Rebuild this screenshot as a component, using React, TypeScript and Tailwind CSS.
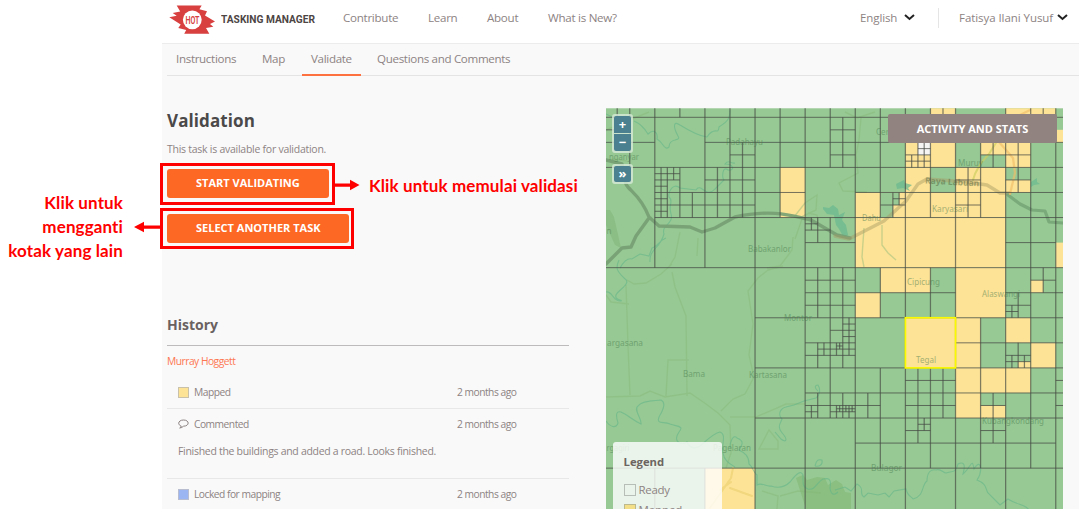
import React from "react";

type Box = [number, number, number, number];

const GREEN = "#97c994";
const YELLOW = "#fde396";

// Task grid coordinates: one unit is the side of a small task square.
const OX = 654.8;
const OY = 117.3;
const U = 25.06;
const px = (x: number) => OX + x * U;
const py = (y: number) => OY + y * U;

const T = -0.36;
const B = 15.65;
const L = -1.96;
const R = 16.32;

// x, y, width, height
const mapped: Box[] = [
  [11, T, 1, 0.36], [14, T, 2, 0.36], [16, 0.5, 0.4, 0.5], [10, 0, 2, 2], [13, 1, 2, 1],
  [10, 2, 1, 1], [12, 2, 2, 1], [14, 2.5, 1, 0.5], [8, 3, 6, 1], [8, 4, 6, 2],
  [16, 5, 0.4, 1], [9, 6, 2, 1], [12, 6, 2, 2], [8, 7, 1, 1], [15, 6.5, 0.5, 0.5],
  [10, 8, 2, 2], [12, 8, 1, 2], [14, 8, 1, 1], [15, 9, 1, 1], [14.5, 9.75, 0.5, 0.25],
  [12, 10, 3, 1], [12, 11, 1, 1], [13, 11.5, 1, 0.5], [5, 2, 1, 2], [2, 14, 2, 1.7],
];
const validated: Box[] = [
  [13, 1.5, 1, 0.5], [9, 3, 0.5, 1], [9.5, 3, 0.25, 0.5],
];

// y, then x from and to
const rows: [number, number, number][] = [
  [0, L, R], [1, L, 0], [1, 2, R], [2, L, R], [3, 0, 6], [3, 8, R], [4, 0, R], [5, 6, 8], [5, 14, 16],
  [6, L, R], [7, 6, 12], [7, 14, R], [8, 4, R], [9, 6, 8], [9, 12, R], [10, 4, R], [11, 6, R], [12, 4, R],
  [13, 8, 16], [14, L, R],
  [0.5, L, -1.5], [2.5, 0, 1], [2.5, 2, 4], [3.5, 0, 4], [1.5, 3, 4], [0.5, 7, 8], [1.5, 7, 8],
  [2.25, 0, 1], [2.75, 0, 0.5], [3.25, 0, 0.5], [3.75, 0, 0.5],
  [4.5, 6, 7], [4.25, 6, 6.5], [6.5, 6, 8], [7.5, 6, 8], [8.5, 7, 8], [9.5, 6, 8], [9.25, 6.5, 8],
  [8.25, 7.5, 8], [8.75, 7.5, 8], [9.125, 7.25, 7.5], [11.5, 6, 9], [11.75, 6, 6.5], [11.75, 7, 8],
  [11.63, 7.25, 8], [10.5, 10, 12], [10.5, 16, R], [11.5, 10, 12], [11.5, 16, R], [12.5, 10, 11],
  [12.25, 10.5, 11], [12.5, 13, 14], [11.5, 13, 14], [6.5, 15, 16], [7.5, 14, 15], [7.75, 14, 14.5],
  [9.5, 14, 15], [9.75, 14, 15], [1.5, 10, 11], [1.5, 13, 15], [1.25, 10.5, 11], [1.75, 10, 11],
  [2.5, 12, 13], [2.5, 14, 15], [3.5, 12, 13], [3.5, 9, 10], [3.25, 9.5, 10],
];
// x, then y from and to
const cols: [number, number, number][] = [
  [0, T, 6], [0, 14, B], [-1.5, T, 0], [-1, T, 2], [1, T, 0], [1, 2, 4], [2, T, 6], [2, 14, B],
  [3, T, 4], [2.5, 2, 4], [1.5, 3, 4], [3.5, 1, 4], [4, T, B], [5, T, 4], [6, T, B], [7, T, 2],
  [7, 4, 12], [8, T, B], [9, T, 4], [9, 6, 8], [9, 10, 14], [10, T, B], [11, T, 4], [11, 6, 8],
  [11, 10, 14], [12, T, B], [13, 1, 4], [13, 8, 14], [14, T, B], [15, T, 14], [16, T, B],
  [11.5, T, 0], [15.5, T, 0], [0.25, 2, 4], [0.5, 2, 4], [0.75, 2, 2.5], [7.5, 0, 2],
  [6.25, 4, 4.5], [6.5, 4, 5], [6.5, 6, 8], [7.5, 6, 8], [6.5, 9, 10], [6.75, 9, 9.5], [7.25, 9, 9.5],
  [7.5, 8, 10], [7.75, 8, 9.5], [7.375, 9, 9.25], [6.25, 11.5, 12], [6.5, 11, 12], [7.5, 11, 12],
  [7.25, 11.5, 12], [7.375, 11.5, 11.75], [7.625, 11.5, 11.75], [7.75, 11.5, 12], [7.875, 11.5, 11.75],
  [8.5, 11, 12], [10.5, 10, 13], [11.5, 10, 12], [10.75, 12, 12.5], [13.5, 11, 13], [15.5, 6, 7],
  [14.5, 7, 8], [14.25, 7.5, 8], [14.5, 9, 10], [14.25, 9.5, 10], [14.75, 9.5, 10],
  [10.5, 1, 2], [10.75, 1, 2], [10.25, 1.5, 2], [13.5, 1, 2], [14.5, 1, 3], [12.5, 2, 4],
  [9.5, 3, 4], [9.75, 3, 3.5],
];

const places: [string, number, number, number][] = [
  ["Padahayu", 726, 144.5, 37], ["nganyar", 609, 159.5, 30], ["Babakanlor", 748, 251.5, 43],
  ["Cer", 876, 135, 13], ["Muruy", 958, 166, 25], ["Karyasari", 932, 212, 36],
  ["Dahu", 862, 220.5, 19], ["Montor", 784, 320.5, 28], ["argasana", 607, 345.5, 36],
  ["Bama", 683, 377, 22], ["Kartasana", 749, 377.5, 38], ["Cipicung", 907, 285, 33],
  ["Alaswangi", 982, 296.5, 38], ["Tegal", 916, 363, 20], ["rgagiri", 606.5, 450.5, 23],
  ["Pagelaran", 713, 450.5, 38], ["Kubangkondang", 982, 423.5, 62], ["Bulagor", 871, 471, 31],
  ["n", 606.5, 234, 5],
];

function TaskMap() {
  return (
    <svg className="block h-full w-full" viewBox="606 108 457 401" preserveAspectRatio="none">
      <rect x="606" y="108.3" width="457" height="402" fill={GREEN} />
      {mapped.map(([x, y, w, h], i) => (
        <rect key={i} x={px(x)} y={py(y)} width={w * U} height={h * U} fill={YELLOW} />
      ))}
      {validated.map(([x, y, w, h], i) => (
        <rect key={i} x={px(x)} y={py(y)} width={w * U} height={h * U} fill={GREEN} />
      ))}
      <rect x={px(10.5)} y={py(1)} width={U / 2} height={U / 2} fill="#f5f6f4" />

      {/* woods */}
      <path d="M606 210l4 0 4 7 7 31-6-3-9-20z" fill="#87b97f" opacity=".75" />
      <path d="M796 478l7-3 4 5 10-3 8 1 3 7 8-5 6 4 3 8 6 1v16H806z" fill="#85bb79" opacity=".7" />
      <g fill="#6cba90" opacity=".75">
        <path d="M823 207l6 1 4-3 5 4 1 6 6-3-3 8 4 5 2 10-4 3-5-9-3-4-2-10-7-1-4-5z" />
        <path d="M896 184l8-4 1 3 7 2-4 3 2 3-7-3-6 1z" />
        <path d="M1031 182l3-2 3-2v4l3 2-6 1-3 2z" />
      </g>

      {/* minor tracks */}
      <g fill="none" stroke="#85b777" strokeWidth="1.4" opacity=".42">
        <path d="M606 161l8-2 13 2M606 130l19-8 24-10M627 280l7 4 12-1 15-9 11-10M672 272l3 15 11 29 1 80M626 285l2 60 2 50" />
        <path d="M606 397l34-1 10-5 15 6 25-4 16 11 12 9 12 12 1 28-5 15M666 396l2-36h21M721 411l12-12 12-5 9-17M730 417h26l30-13h19" />
        <path d="M754 377l-5-22 4-31-5-33 10-13 10-8 15-4M606 295l5 7 18 2M680 232l-5 25-6 10M698 238l-1 18" />
        <path d="M793 237l-1 13-12 16-13 2M795 239l8-23 13-6 1-15-12 8-11 14M808 213l9 2 1 8" />
        <path d="M845 112l12 6 18-6M861 118l-2 22-3 15 2 18-19 10 4 8 24 1M864 228l-2 29 2 10M882 225v20l6 8 8 7" />
        <path d="M759 449l10-19 9 11v8zM762 491l16 5-1 13M780 496l18-5 23 2" />
      </g>
      {/* rivers */}
      <g fill="none" stroke="#62b58a" strokeWidth="1.1" opacity=".58">
        <path d="M634 121c7 3 11 8 14 13 6-6 10-1 9 5 7 4 7 12 12 8 0-10 13-5 9-11-5-9-5-16 2-11 8 5 18 11 27 12 8-12 11-1 12-10 5-4 11-5 11-17" />
        <path d="M606 114l12 6 8-5M735 163c-4 1-6-4-10 1 9 0 10 7 3 6-6-5-6 8-4 10l-9 9c-9 10-14-7-19 1l-16-2c-7-6-12 4-11 9 5 4-1 7 2 17s-10 11-7 20c-4 15-15 15-14 28M620 268c4-7 8-10 12-9l8-5 9 2 3-8c5-1 8-8 14-10" />
        <path d="M619 260c-5 11 1 13 5 18 9 5-6 12-8 17s7 5 5 6c-8 1-9-11-15-9" />
        <path d="M606 421c4 6 10 8 12 2-3-10-1-12 3-11 7 3 11 8 20 12 1-6-8-14-3-18 5-6 16-5 23-6 6 3 1 12-2 17-3 8 5 4 11 7 9 3 14 2 9 8-7 10 3 14 8 10 2 5 7 8 13 4 8-7 14-13 20-14 7 2 1 14 3 21 1 8 7 11 12 14M730 448c0-8 4-14 7-10 8 3 5 7 2 12 6 3 10 6 10 14 4 3 4 8 8 11v10c5-3 9 2 14 1 6 2 13 2 19-4 7-9 11-12 13-7 0 7-1 12 5 14 7 2 9-7 15-10 5-1 9-1 7 9 1 8 5 7 8 4" />
        <path d="M783 434c-7-8-2-11-1-15-5-5-1-11 4-12l8-2 10-4 12-3c5-4 4-10 2-13-4 0-3 4 0 6M783 434c5 6 3 9-2 5l-6-7M815 466c2-8 4-6 7-6 1 5-3 7-7 6" />
        <path d="M835 490l10-3 6 4 6-7c9 5 1 10 7 13l4-4 10 2 7-2 4 4 5-6 12-2c2 8 4 6 7 10 12-3 8-14 14-18 0-9 4-12 9-11 5-2 7 3 10 3 7-2 10 0 12-9 9-4 6 6 5 10 8-6 9-18 11-5 7-12 9 2 3 11 10 4 8 8 11 13l12 12 8-6c12 8 18 3 24 16" />
      </g>
      {/* main roads */}
      <g fill="none" strokeLinejoin="round" strokeLinecap="round">
        <path d="M606 264l16-16 9-1 5-11 13-18M606 160l16 4 4 20c3 7 14 10 23 33l10 9 31 1 12 5 13-4 20-11c40-9 60 0 76 3l26 15 13 3" stroke="#769f73" strokeWidth="3.4" opacity=".9" />
        <path d="M835 236l14 3 35-18 22-20 12-17 9-5 40 3 20 3 13 8h10" stroke="#a69963" strokeWidth="3.4" opacity=".45" />
        <path d="M1008 195l12 9 12 6 13 1 4 11 14 1" stroke="#709d72" strokeWidth="3.2" opacity=".75" />
        <path d="M973 180c3-12 10-20 16-26l10-16" stroke="#cdd05c" strokeWidth="2" opacity=".65" />
        <path d="M999 142l14 16 2 15-5 21M1014 118l16-8" stroke="#f1be69" strokeWidth="2.3" opacity=".65" />
        <path d="M733 468l-2 10-9 13-12 17M731 482l-11 8M730 488l22 8" stroke="#edd274" strokeWidth="2" opacity=".7" />
      </g>

      <g stroke="#454944" fill="none">
        {rows.map(([y, a, b], i) => (
          <line key={i} x1={px(a)} x2={px(b)} y1={py(y)} y2={py(y)} strokeWidth="1" opacity=".75" />
        ))}
        {cols.map(([x, a, b], i) => (
          <line key={i} x1={px(x)} x2={px(x)} y1={py(a)} y2={py(b)} strokeWidth="1.25" opacity=".68" />
        ))}
      </g>
      <g fontFamily="Noto Sans, Open Sans, sans-serif" fontSize="8" fill="#497c4e" opacity=".5">
        {places.map(([name, x, y, w]) => (
          <text key={name} x={x} y={y} textLength={w} lengthAdjust="spacingAndGlyphs">{name}</text>
        ))}
        <text x="925" y="183.5" fontSize="8.5" fontWeight="700" textLength="54" lengthAdjust="spacingAndGlyphs" fill="#55683f" transform="rotate(3 925 184)">Raya Labuan</text>
      </g>
      <rect x={px(10)} y={py(8)} width={2 * U} height={2 * U} fill="none" stroke="#fbfb00" strokeWidth="1.7" />
    </svg>
  );
}

function Chevron() {
  return (
    <svg className="h-[7px] w-[11px]" viewBox="0 0 11 7" fill="none" stroke="#222" strokeWidth="2">
      <path d="M1 1l4.5 4L10 1" />
    </svg>
  );
}

function HotLogo() {
  return (
    <svg className="h-[30px] w-[46px] shrink-0" viewBox="0 0 46 30">
      <path d="M7.7 1.5h25l-2.3 3.8 7.6 1.9-2 4.4 10 5.9-5 2.6 3.3 2.6-7.3 1.2 3.3 5.8H15.2l2-3.6-7.9-2 2.4-3.5L.3 13.3l7.4-1.6-4-2.6 7.5-1.5z" fill="#d83f3f" />
      <circle cx="23.3" cy="15.8" r="9.4" fill="#fff" />
      <text x="16.4" y="19.6" fontFamily="Roboto" fontWeight="600" fontSize="10" textLength="14" lengthAdjust="spacingAndGlyphs" fill="#d83f3f">HOT</text>
    </svg>
  );
}

function HistoryRow({ mark, label }: { mark: React.ReactNode; label: string }) {
  return (
    <div className="flex h-[31px] items-center pl-[11px] text-[10.25px] tracking-[-0.5px]">
      <span className="flex w-[16px] pb-px">{mark}</span>
      <span className="w-[263px]">{label}</span>
      <span>2 months ago</span>
    </div>
  );
}

const button = "flex h-[29px] items-center rounded-[3px] bg-[#fd6825] pl-[29px] text-[11px] font-bold text-white";

export default function App() {
  return (
    <div className="relative h-[512px] w-[1085px] overflow-hidden bg-white font-['Open_Sans','Noto_Sans',sans-serif] text-[#8d8383]">
      <div className="ml-[162px] flex h-[509px] w-[917px] flex-col overflow-hidden bg-[#f9f9f9]">
        <header className="flex h-[43.5px] shrink-0 items-center border-b border-[#ececec] bg-white pb-[5px] pl-[7px] text-[11.6px]">
          <HotLogo />
          <svg className="ml-[6px] h-[16px] w-[98px]" viewBox="0 0 98 16">
            <text x="0" y="12" fontFamily="Roboto" fontWeight="700" fontSize="10.5" textLength="94" lengthAdjust="spacingAndGlyphs" fill="#4d4544">TASKING MANAGER</text>
          </svg>
          <nav className="ml-[24px] flex pb-[2px] tracking-[-0.28px] whitespace-nowrap">
            <span className="w-[85px]">Contribute</span>
            <span className="w-[59px]">Learn</span>
            <span className="w-[61px]">About</span>
            <span>What is New?</span>
          </nav>
          <div className="mr-[11px] ml-auto flex items-center pb-[2px] whitespace-nowrap">
            <span className="w-[44px] text-[11.5px] tracking-[-0.1px]">English</span>
            <Chevron />
            <span className="mr-[20px] ml-[23px] h-[20px] w-px bg-[#e5e5e5]" />
            <span className="w-[98px] text-[11.5px] tracking-[-0.06px]">Fatisya Ilani Yusuf</span>
            <Chevron />
          </div>
        </header>
        <nav className="ml-[5px] flex h-[32px] shrink-0 border-b border-[#e4e4e4] pl-[9px] text-[11.6px] leading-[29px] tracking-[-0.33px] whitespace-nowrap">
          <span className="w-[86px]">Instructions</span>
          <span className="w-[40px]">Map</span>
          <span className="h-[32px] w-[59px] border-b-2 border-[#fd7040] pl-[9px]">Validate</span>
          <span className="ml-[16px]">Questions and Comments</span>
        </nav>
        <main className="flex">
          <section className="w-[407px] pl-[5px]">
            <h1 className="mt-[32px] text-[17px] leading-[26px] font-bold tracking-[0.1px] text-[#4b4949]">Validation</h1>
            <p className="mt-[7px] text-[10.5px] leading-[16px] tracking-[-0.26px]">This task is available for validation.</p>
            <button className={`${button} mt-[12px] w-[162px]`}>START VALIDATING</button>
            <button className={`${button} mt-[16px] w-[182px]`}>SELECT ANOTHER TASK</button>
            <h2 className="mt-[71px] text-[14px] leading-[22px] font-bold text-[#6a6161]">History</h2>
            <div className="mt-[9px] h-[1.5px] bg-[#bdbbbb]" />
            <p className="mt-[8px] text-[10.25px] leading-[14px] tracking-[-0.5px] text-[#fd7752]">Murray Hoggett</p>
            <div className="mt-[9px] border-b border-[#e8e8e8]">
              <HistoryRow mark={<i className="h-[11px] w-[11px] border border-[#c9c1a9] bg-[#fde396]" />} label="Mapped" />
            </div>
            <div className="h-[70px] border-b border-[#e8e8e8]">
              <HistoryRow
                mark={
                  <svg className="h-[10px] w-[11px]" viewBox="0 0 11 10" fill="none" stroke="#8d8383">
                    <path d="M3.3 7.1C-.9 5.7.2 1 5.5 1c6.2 0 6.2 6.1 0 6.2Q4 8.8 1.7 9q1.3-.7 1.6-1.9z" />
                  </svg>
                }
                label="Commented"
              />
              <p className="pl-[11px] text-[10.5px] leading-[23px] tracking-[-0.3px]">Finished the buildings and added a road. Looks finished.</p>
            </div>
            <HistoryRow mark={<i className="h-[11px] w-[11px] border border-[#b9bdd0] bg-[#9bb5f2]" />} label="Locked for mapping" />
          </section>

          <section className="relative mt-[32.5px] ml-[37px] h-[401px] w-[457px]">
            <TaskMap />
            <div className="absolute top-[6px] left-[6px] rounded-[3px] bg-[#d8ead7]/80 p-[2px] text-center text-[13px] leading-[16px] font-bold text-white">
              <div className="h-[17px] w-[17px] rounded-t-[2px] bg-[#4a808f]">+</div>
              <div className="mt-px h-[17px] w-[17px] rounded-b-[2px] bg-[#4a808f]">−</div>
            </div>
            <div className="absolute top-[56px] left-[6px] rounded-[3px] bg-[#d8ead7]/80 p-[2px]">
              <div className="h-[16px] w-[17px] rounded-[2px] bg-[#4a808f] text-center text-[13px] leading-[14px] font-bold text-white">»</div>
            </div>
            <div className="absolute top-[6px] left-[282px] flex h-[29px] w-[169px] items-center justify-center rounded-[2px] bg-[#918380] pt-px text-[11px] font-bold text-white">
              ACTIVITY AND STATS
            </div>
            <div className="absolute bottom-0 left-[7px] h-[67px] w-[109px] overflow-hidden rounded-t-[3px] bg-white/80 pt-[11px] pl-[10.5px]">
              <h3 className="text-[11.3px] leading-[18px] font-bold text-[#6c6461]">Legend</h3>
              <div className="mt-[9px] flex h-[20px] items-center gap-[3px] text-[11.5px] tracking-[-0.3px]">
                <i className="h-[12px] w-[12px] border border-[#b7beb8]" />Ready
              </div>
              <div className="flex h-[20px] items-center gap-[3px] text-[11.5px] tracking-[-0.1px]">
                <i className="h-[12px] w-[12px] border border-[#bdb98f] bg-[#f3df87]" />Mapped
              </div>
            </div>
          </section>
        </main>
      </div>

      {/* Instruction callouts laid over the page */}
      <div className="absolute top-[163px] left-[160px] h-[42px] w-[175px] border-[3px] border-[#fe0000]" />
      <div className="absolute top-[208px] left-[160px] h-[41px] w-[194px] border-[3px] border-[#fe0000]" />
      <svg className="absolute top-[179px] left-[334px] h-[12px] w-[26px]" viewBox="0 0 26 12" fill="#fe0000">
        <path d="M0 4.5h16V.7L25.5 6 16 11.3V7.7H0z" />
      </svg>
      <svg className="absolute top-[221px] left-[134px] h-[12px] w-[28px]" viewBox="0 0 28 12" fill="#fe0000">
        <path d="M28 4.5H10V.7L0 6l10 5.3V7.7h18z" />
      </svg>
      <p className="absolute top-[174px] left-[369px] font-[Lato] text-[17px] leading-[24px] font-bold tracking-[0.12px] whitespace-nowrap text-[#fe0000]">Klik untuk memulai validasi</p>
      <p className="absolute top-[191px] left-0 w-[123px] text-right font-[Lato] text-[17px] leading-[24px] font-bold tracking-[0.12px] whitespace-nowrap text-[#fe0000]">
        Klik untuk<br />mengganti<br />kotak yang lain
      </p>
    </div>
  );
}
